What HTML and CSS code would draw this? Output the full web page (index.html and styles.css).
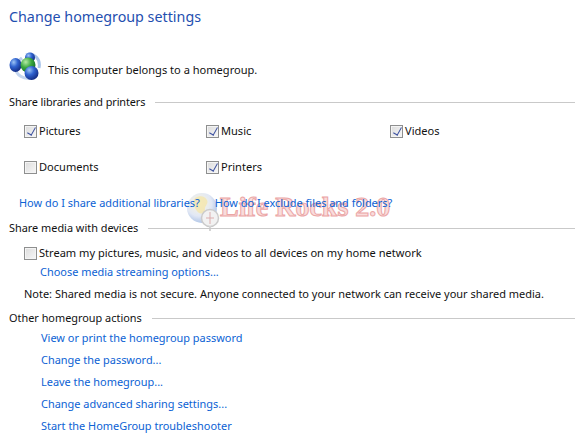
FILE: index.html
```html
<!DOCTYPE html>
<html lang="en">
<head>
<meta charset="utf-8">
<title>Change homegroup settings</title>
<link rel="stylesheet" href="styles.css">
</head>
<body>
<main class="page">
  <h1 class="title">Change homegroup settings</h1>
  <div class="status">
    <svg class="hg-icon" width="32" height="30" viewBox="0 0 32 30" aria-hidden="true">
      <defs>
        <radialGradient id="b" cx="35%" cy="30%" r="75%"><stop offset="0" stop-color="#9cc4f5"/><stop offset=".45" stop-color="#2f62cf"/><stop offset="1" stop-color="#12297f"/></radialGradient>
        <radialGradient id="g" cx="35%" cy="30%" r="75%"><stop offset="0" stop-color="#b5eba5"/><stop offset=".5" stop-color="#3aa83f"/><stop offset="1" stop-color="#126b28"/></radialGradient>
      </defs>
      <path d="M17 4C25 1 32 8 30 17" fill="none" stroke="#a9c4ea" stroke-width="3"/>
      <path d="M6 16C7 24 14 29 24 27" fill="none" stroke="#c3d5ef" stroke-width="3"/>
      <path d="M6 13L13 7" stroke="#b9cdea" stroke-width="3"/>
      <circle cx="21" cy="6.500" r="5" fill="url(#b)"/>
      <ellipse cx="6.5" cy="14" rx="6" ry="7" fill="url(#b)"/>
      <circle cx="19" cy="14" r="7.500" fill="url(#g)"/>
      <circle cx="22.500" cy="22" r="7" fill="url(#b)"/>
    </svg>
    <span class="status-text">This computer belongs to a homegroup.</span>
  </div>

  <section class="group">
    <h2 class="heading heading-tight"><span>Share libraries and printers</span></h2>
    <div class="choices">
      <label class="choice"><span class="box on"></span>Pictures</label>
      <label class="choice"><span class="box on"></span>Music</label>
      <label class="choice"><span class="box on"></span>Videos</label>
      <label class="choice"><span class="box"></span>Documents</label>
      <label class="choice"><span class="box on"></span>Printers</label>
    </div>
    <div class="help">
      <a href="#">How do I share additional libraries?</a>
      <a href="#">How do I exclude files and folders?</a>
    </div>
  </section>

  <section class="group media">
    <h2 class="heading"><span>Share media with devices</span></h2>
    <label class="choice stream"><span class="box"></span>Stream my pictures, music, and videos to all devices on my home network</label>
    <a class="stream-link" href="#">Choose media streaming options...</a>
    <p class="note">Note: Shared media is not secure. Anyone connected to your network can receive your shared media.</p>
  </section>

  <section class="group other">
    <h2 class="heading"><span>Other homegroup actions</span></h2>
    <ul class="actions">
      <li><a href="#">View or print the homegroup password</a></li>
      <li><a href="#">Change the password...</a></li>
      <li><a href="#">Leave the homegroup...</a></li>
      <li><a href="#">Change advanced sharing settings...</a></li>
      <li><a href="#">Start the HomeGroup troubleshooter</a></li>
    </ul>
  </section>

  <div class="watermark">
    <svg class="globe" width="36" height="46" viewBox="0 0 36 46" aria-hidden="true">
      <defs><radialGradient id="w" cx="40%" cy="35%" r="70%"><stop offset="0" stop-color="#fdf6d8"/><stop offset=".6" stop-color="#dfe6f4"/><stop offset="1" stop-color="#9fb9e2"/></radialGradient></defs>
      <circle cx="15" cy="18" r="15" fill="url(#w)"/>
      <path d="M8 8c5-3 10-2 12 2s-3 6-2 10-5 5-8 1-5-9-2-13z" fill="#f2e3a5" opacity=".8"/>
      <circle cx="23" cy="28" r="8.500" fill="#f1f1f1" stroke="#c6c6c6" stroke-width="1.500"/>
      <path d="M23 22v12M19 28h8" stroke="#d9a5a5"/>
      <path d="M23 36v5" stroke="#d0d0d0" stroke-width="2"/>
    </svg>
    <span class="wm-text">Life Rocks 2.0</span>
  </div>
</main>
</body>
</html>
```
FILE: styles.css
```css
* { box-sizing: border-box; }
html { margin: 0; padding: 0; background: #fff; }
body {
  margin: 0;
  width: 575px;
  height: 444px;
  overflow: hidden;
  font: 11.070px/16px "Noto Sans", "Open Sans", sans-serif;
  color: #111;
}
a { color: #0c62d4; font-size: 10.950px; text-decoration: none; }

.page { position: relative; isolation: isolate; height: 444px; padding: 8px 0 0 9px; }

.title {
  margin: 0;
  font-size: 14.300px;
  line-height: 18px;
  font-weight: 400;
  color: #1f4fb0;
}

.status {
  display: flex;
  align-items: center;
  gap: 7px;
  margin-top: 25px;
  height: 30px;
}
.hg-icon { flex: none; }
.status-text { padding-top: 8px; }

.heading {
  display: flex;
  align-items: center;
  gap: 10px;
  margin: 0;
  font-size: 10.900px;
  line-height: 16px;
  font-weight: 400;
}
.heading-tight { letter-spacing: -0.100px; }
.heading::after {
  content: "";
  flex: 1;
  height: 1px;
  background: #c9c9c9;
}

.group { margin-top: 13px; }

.choices {
  display: grid;
  grid-template-columns: 182px 184px 1fr;
  row-gap: 20px;
  margin: 13px 0 0 15px;
}
.choice { display: flex; align-items: center; gap: 2px; }

.box {
  position: relative;
  flex: none;
  width: 13px;
  height: 13px;
  border: 1px solid #8e8f8f;
  background: linear-gradient(135deg, #dcdcdc, #f7f7f7);
  box-shadow: inset 0 0 0 1px #f4f4f4;
}
.box.on::after {
  content: "";
  position: absolute;
  left: 3.500px;
  top: 0.500px;
  width: 4px;
  height: 8px;
  border: solid #3a4f9f;
  border-width: 0 1.500px 1.500px 0;
  transform: rotate(30deg);
}

.help {
  display: flex;
  gap: 15px;
  margin: 20px 0 0 10px;
}

.media { margin-top: 9px; }
.stream { margin: 9px 0 0 15px; }
.stream-link { display: block; margin: 3px 0 0 31px; }
.note { margin: 6px 0 0 15px; font-size: 10.980px; white-space: nowrap; }

.other { margin-top: 8px; }
.actions {
  list-style: none;
  margin: 4px 0 0 32px;
  padding: 0;
  display: grid;
  row-gap: 6px;
}

.watermark {
  position: absolute;
  z-index: -1;
  left: 187px;
  top: 190px;
  display: flex;
  align-items: flex-start;
  gap: 0;
  pointer-events: none;
}
.globe { flex: none; margin-right: -3px; opacity: .9; }
.wm-text {
  font: 700 28px/34px "Liberation Serif", serif;
  color: #f9dcdc;
  -webkit-text-stroke: 1px #eba6a6;
  white-space: nowrap;
}
```
